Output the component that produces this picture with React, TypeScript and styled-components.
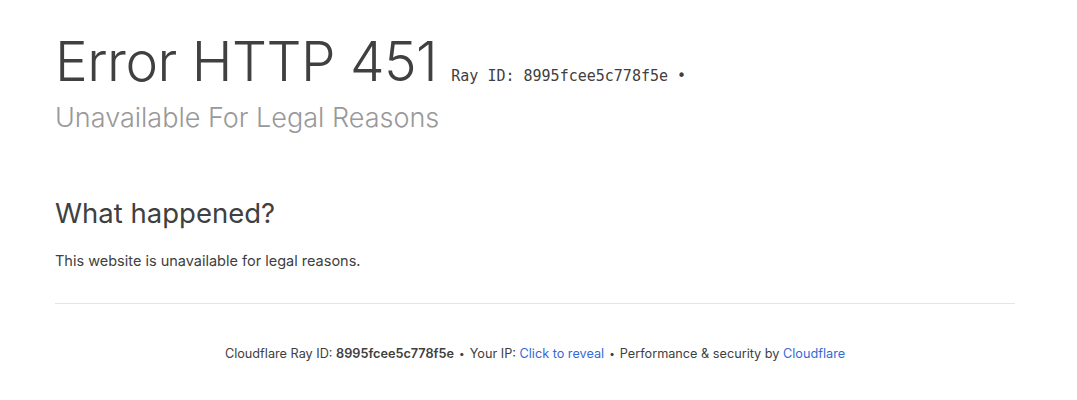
import React from 'react';
import styled, { createGlobalStyle } from 'styled-components';

const GlobalStyle = createGlobalStyle`
  html, body {
    margin: 0;
    padding: 0;
    background: #fff;
  }
  body {
    font-family: Inter, "Noto Sans", "Liberation Sans", sans-serif;
    color: #404040;
    -webkit-font-smoothing: antialiased;
  }
`;

const Page = styled.div`
  padding: 34px 62px 0 55px;
  width: 1077px;
  box-sizing: border-box;
`;

const Header = styled.header`
  margin-bottom: 57px;
`;

const Title = styled.h1`
  margin: 0;
  display: flex;
  align-items: baseline;
  gap: 14px;
  font-size: 55px;
  line-height: 55px;
  font-weight: 300;
  letter-spacing: -0.5px;
  color: #404040;
`;

const RayId = styled.span`
  font-family: "DejaVu Sans Mono", "Liberation Mono", monospace;
  font-size: 15px;
  line-height: 1;
  font-weight: 400;
  letter-spacing: 0;
  color: #404040;
`;

const Subtitle = styled.h2`
  margin: 9px 0 0;
  font-size: 27px;
  line-height: 40px;
  font-weight: 300;
  color: #999;
`;

const Section = styled.section`
  padding-bottom: 32px;
  border-bottom: 1px solid #e5e5e5;
`;

const SectionTitle = styled.h2`
  margin: 0 0 19px;
  font-size: 27.5px;
  line-height: 36px;
  font-weight: 400;
  color: #404040;
`;

const Text = styled.p`
  margin: 0;
  font-size: 14.5px;
  line-height: 21px;
  color: #404040;
`;

const Footer = styled.footer`
  margin-top: 39px;
  text-align: center;
  font-size: 12.7px;
  line-height: 20px;
  color: #404040;
`;

const Strong = styled.strong`
  font-weight: 600;
`;

const Sep = styled.span`
  margin: 0 5px;
  font-size: 10px;
  vertical-align: 1px;
`;

const Link = styled.a`
  color: #3469d4;
  text-decoration: none;
`;

export default function App() {
  return (
    <>
      <GlobalStyle />
      <Page>
        <Header>
          <Title>
            Error HTTP 451
            <RayId>Ray ID: 8995fcee5c778f5e •</RayId>
          </Title>
          <Subtitle>Unavailable For Legal Reasons</Subtitle>
        </Header>
        <Section>
          <SectionTitle>What happened?</SectionTitle>
          <Text>This website is unavailable for legal reasons.</Text>
        </Section>
        <Footer>
          Cloudflare Ray ID: <Strong>8995fcee5c778f5e</Strong>
          <Sep>•</Sep>
          Your IP: <Link href="#">Click to reveal</Link>
          <Sep>•</Sep>
          Performance &amp; security by <Link href="#">Cloudflare</Link>
        </Footer>
      </Page>
    </>
  );
}
